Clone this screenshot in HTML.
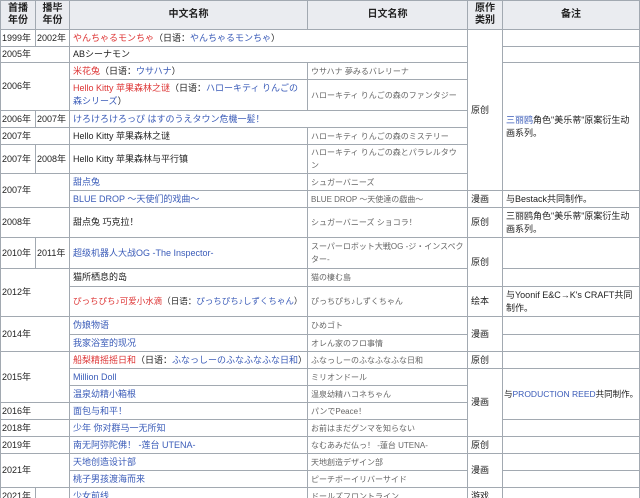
<!DOCTYPE html>
<html><head><meta charset="utf-8">
<style>
html,body{margin:0;padding:0;background:#fff;width:640px;height:498px;overflow:hidden}
table{border-collapse:collapse;table-layout:fixed;width:639px;font-family:"Liberation Sans","Noto Sans CJK SC",sans-serif;font-size:9px;color:#222}
td,th{border:1px solid #a2a9b1;padding:0 3px;line-height:13px;vertical-align:middle;overflow:hidden;white-space:nowrap}
th{background:#eaecf0;font-weight:bold;text-align:center;color:#222;white-space:normal;line-height:12px;font-size:10px}
td.y{padding:0 1px}
td.w{white-space:normal}
.b{color:#3a5bb8}
.r{color:#d33}
.j{color:#666;font-size:8px}
.s{font-size:8.5px}
.p{padding:0 1px;font-size:8.5px}
</style></head><body>
<table>
<colgroup><col style="width:35px"><col style="width:34px"><col style="width:238px"><col style="width:160px"><col style="width:35px"><col style="width:137px"></colgroup>
<tr style="height:29px"><th>首播年份</th><th>播毕年份</th><th>中文名称</th><th>日文名称</th><th>原作类别</th><th>备注</th></tr>
<tr style="height:17px"><td class="y">1999年</td><td class="y">2002年</td><td colspan="2"><span class="r">やんちゃるモンちゃ</span>（日语：<span class="b">やんちゃるモンちゃ</span>）</td><td rowspan="8">原创</td><td></td></tr>
<tr style="height:16px"><td class="y" colspan="2">2005年</td><td colspan="2">ABシーナモン</td><td></td></tr>
<tr style="height:17px"><td class="y" colspan="2" rowspan="2">2006年</td><td><span class="r">米花兔</span>（日语：<span class="b">ウサハナ</span>）</td><td class="j">ウサハナ 夢みるバレリーナ</td><td rowspan="6" class="w"><span class="b">三丽鸥</span>角色"美乐蒂"原案衍生动画系列。</td></tr>
<tr style="height:31px"><td class="w"><span class="r">Hello Kitty 苹果森林之谜</span>（日语：<span class="b">ハローキティ りんごの森シリーズ</span>）</td><td class="j">ハローキティ りんごの森のファンタジー</td></tr>
<tr style="height:17px"><td class="y">2006年</td><td class="y">2007年</td><td colspan="2" class="b">けろけろけろっぴ はすのうえタウン危機一髪！</td></tr>
<tr style="height:17px"><td class="y" colspan="2">2007年</td><td>Hello Kitty 苹果森林之谜</td><td class="j">ハローキティ りんごの森のミステリー</td></tr>
<tr style="height:29px"><td class="y">2007年</td><td class="y">2008年</td><td>Hello Kitty 苹果森林与平行镇</td><td class="j w">ハローキティ りんごの森とパラレルタウン</td></tr>
<tr style="height:17px"><td class="y" colspan="2" rowspan="2">2007年</td><td class="b">甜点兔</td><td class="j">シュガーバニーズ</td></tr>
<tr style="height:17px"><td class="b">BLUE DROP ～天使们的戏曲～</td><td class="j">BLUE DROP ～天使達の戯曲～</td><td>漫画</td><td>与Bestack共同制作。</td></tr>
<tr style="height:30px"><td class="y" colspan="2">2008年</td><td>甜点兔 巧克拉！</td><td class="j">シュガーバニーズ ショコラ！</td><td>原创</td><td class="w">三丽鸥角色"美乐蒂"原案衍生动画系列。</td></tr>
<tr style="height:31px"><td class="y">2010年</td><td class="y">2011年</td><td class="b">超级机器人大战OG -The Inspector-</td><td class="j w">スーパーロボット大戦OG -ジ・インスペクター-</td><td rowspan="2">原创</td><td></td></tr>
<tr style="height:18px"><td class="y" colspan="2" rowspan="2">2012年</td><td>猫所栖息的岛</td><td class="j">猫の棲む島</td><td></td></tr>
<tr style="height:30px"><td class="s"><span class="r">ぴっちぴち♪可爱小水滴</span>（日语：<span class="b">ぴっちぴち♪しずくちゃん</span>）</td><td class="j">ぴっちぴち♪しずくちゃん</td><td>绘本</td><td class="w">与Yoonif E&amp;C→K's CRAFT共同制作。</td></tr>
<tr style="height:18px"><td class="y" colspan="2" rowspan="2">2014年</td><td class="b">伪娘物语</td><td class="j">ひめゴト</td><td rowspan="2">漫画</td><td></td></tr>
<tr style="height:17px"><td class="b">我家浴室的现况</td><td class="j">オレん家のフロ事情</td><td></td></tr>
<tr style="height:17px"><td class="y" colspan="2" rowspan="3">2015年</td><td><span class="r">船梨精摇摇日和</span>（日语：<span class="b">ふなっしーのふなふなふな日和</span>）</td><td class="j">ふなっしーのふなふなふな日和</td><td>原创</td><td></td></tr>
<tr style="height:17px"><td class="b">Million Doll</td><td class="j">ミリオンドール</td><td rowspan="4">漫画</td><td rowspan="3" class="p">与<span class="b">PRODUCTION REED</span>共同制作。</td></tr>
<tr style="height:17px"><td class="b">温泉幼精小箱根</td><td class="j">温泉幼精ハコネちゃん</td></tr>
<tr style="height:17px"><td class="y" colspan="2">2016年</td><td class="b">面包与和平！</td><td class="j">パンでPeace！</td></tr>
<tr style="height:17px"><td class="y" colspan="2">2018年</td><td class="b">少年 你对群马一无所知</td><td class="j">お前はまだグンマを知らない</td><td></td></tr>
<tr style="height:17px"><td class="y" colspan="2">2019年</td><td class="b">南无阿弥陀佛！ -莲台 UTENA-</td><td class="j">なむあみだ仏っ！ -蓮台 UTENA-</td><td>原创</td><td></td></tr>
<tr style="height:17px"><td class="y" colspan="2" rowspan="2">2021年</td><td class="b">天地创造设计部</td><td class="j">天地創造デザイン部</td><td rowspan="2">漫画</td><td></td></tr>
<tr style="height:17px"><td class="b">桃子男孩渡海而来</td><td class="j">ピーチボーイリバーサイド</td><td></td></tr>
<tr style="height:17px"><td class="y">2021年</td><td></td><td class="b">少女前线</td><td class="j">ドールズフロントライン</td><td>游戏</td><td></td></tr>
</table>
</body></html>
